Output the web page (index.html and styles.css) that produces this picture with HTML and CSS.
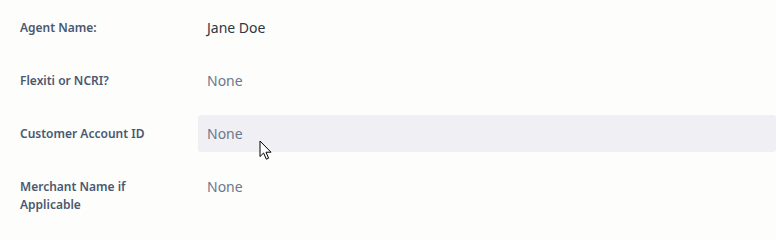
FILE: index.html
```html
<!DOCTYPE html>
<html>
<head>
<meta charset="utf-8">
<link rel="stylesheet" href="styles.css">
</head>
<body>
<div class="fields">
  <div class="row">
    <div class="label">Agent Name:</div>
    <div class="value">Jane Doe</div>
  </div>
  <div class="row">
    <div class="label">Flexiti or NCRI?</div>
    <div class="value empty">None</div>
  </div>
  <div class="row">
    <div class="label">Customer Account ID</div>
    <div class="value empty hover">None</div>
  </div>
  <div class="row">
    <div class="label">Merchant Name if Applicable</div>
    <div class="value empty">None</div>
  </div>
</div>
<svg class="cursor" width="14" height="21" viewBox="0 0 14 21">
  <path d="M1 1 L1 16.5 L4.6 13 L7.3 19.2 L9.6 18.2 L7 12.2 L12 12.2 Z" fill="#fff" stroke="#000" stroke-width="1" stroke-linejoin="miter"/>
</svg>
</body>
</html>
```
FILE: styles.css
```css
html, body {
  margin: 0;
  padding: 0;
  background: #fdfdfb;
  font-family: "Noto Sans", "Open Sans", sans-serif;
}
body {
  position: relative;
  width: 776px;
  height: 214px;
  overflow: hidden;
}
.fields {
  display: flex;
  flex-direction: column;
  gap: 16px;
  padding-top: 9px;
}
.row {
  display: grid;
  grid-template-columns: 178px 1fr;
  padding-left: 20px;
}
.label {
  font-size: 12px;
  font-weight: 600;
  line-height: 18px;
  color: #4a5872;
  padding-top: 10px;
  padding-right: 40px;
}
.value {
  font-size: 14px;
  line-height: 21px;
  padding: 8px 9px;
  color: #2f3646;
  border-radius: 3px;
}
.value.empty {
  color: #6b778c;
}
.value.hover {
  background: #f0f0f4;
}
.cursor {
  position: absolute;
  left: 259px;
  top: 140px;
}
```
